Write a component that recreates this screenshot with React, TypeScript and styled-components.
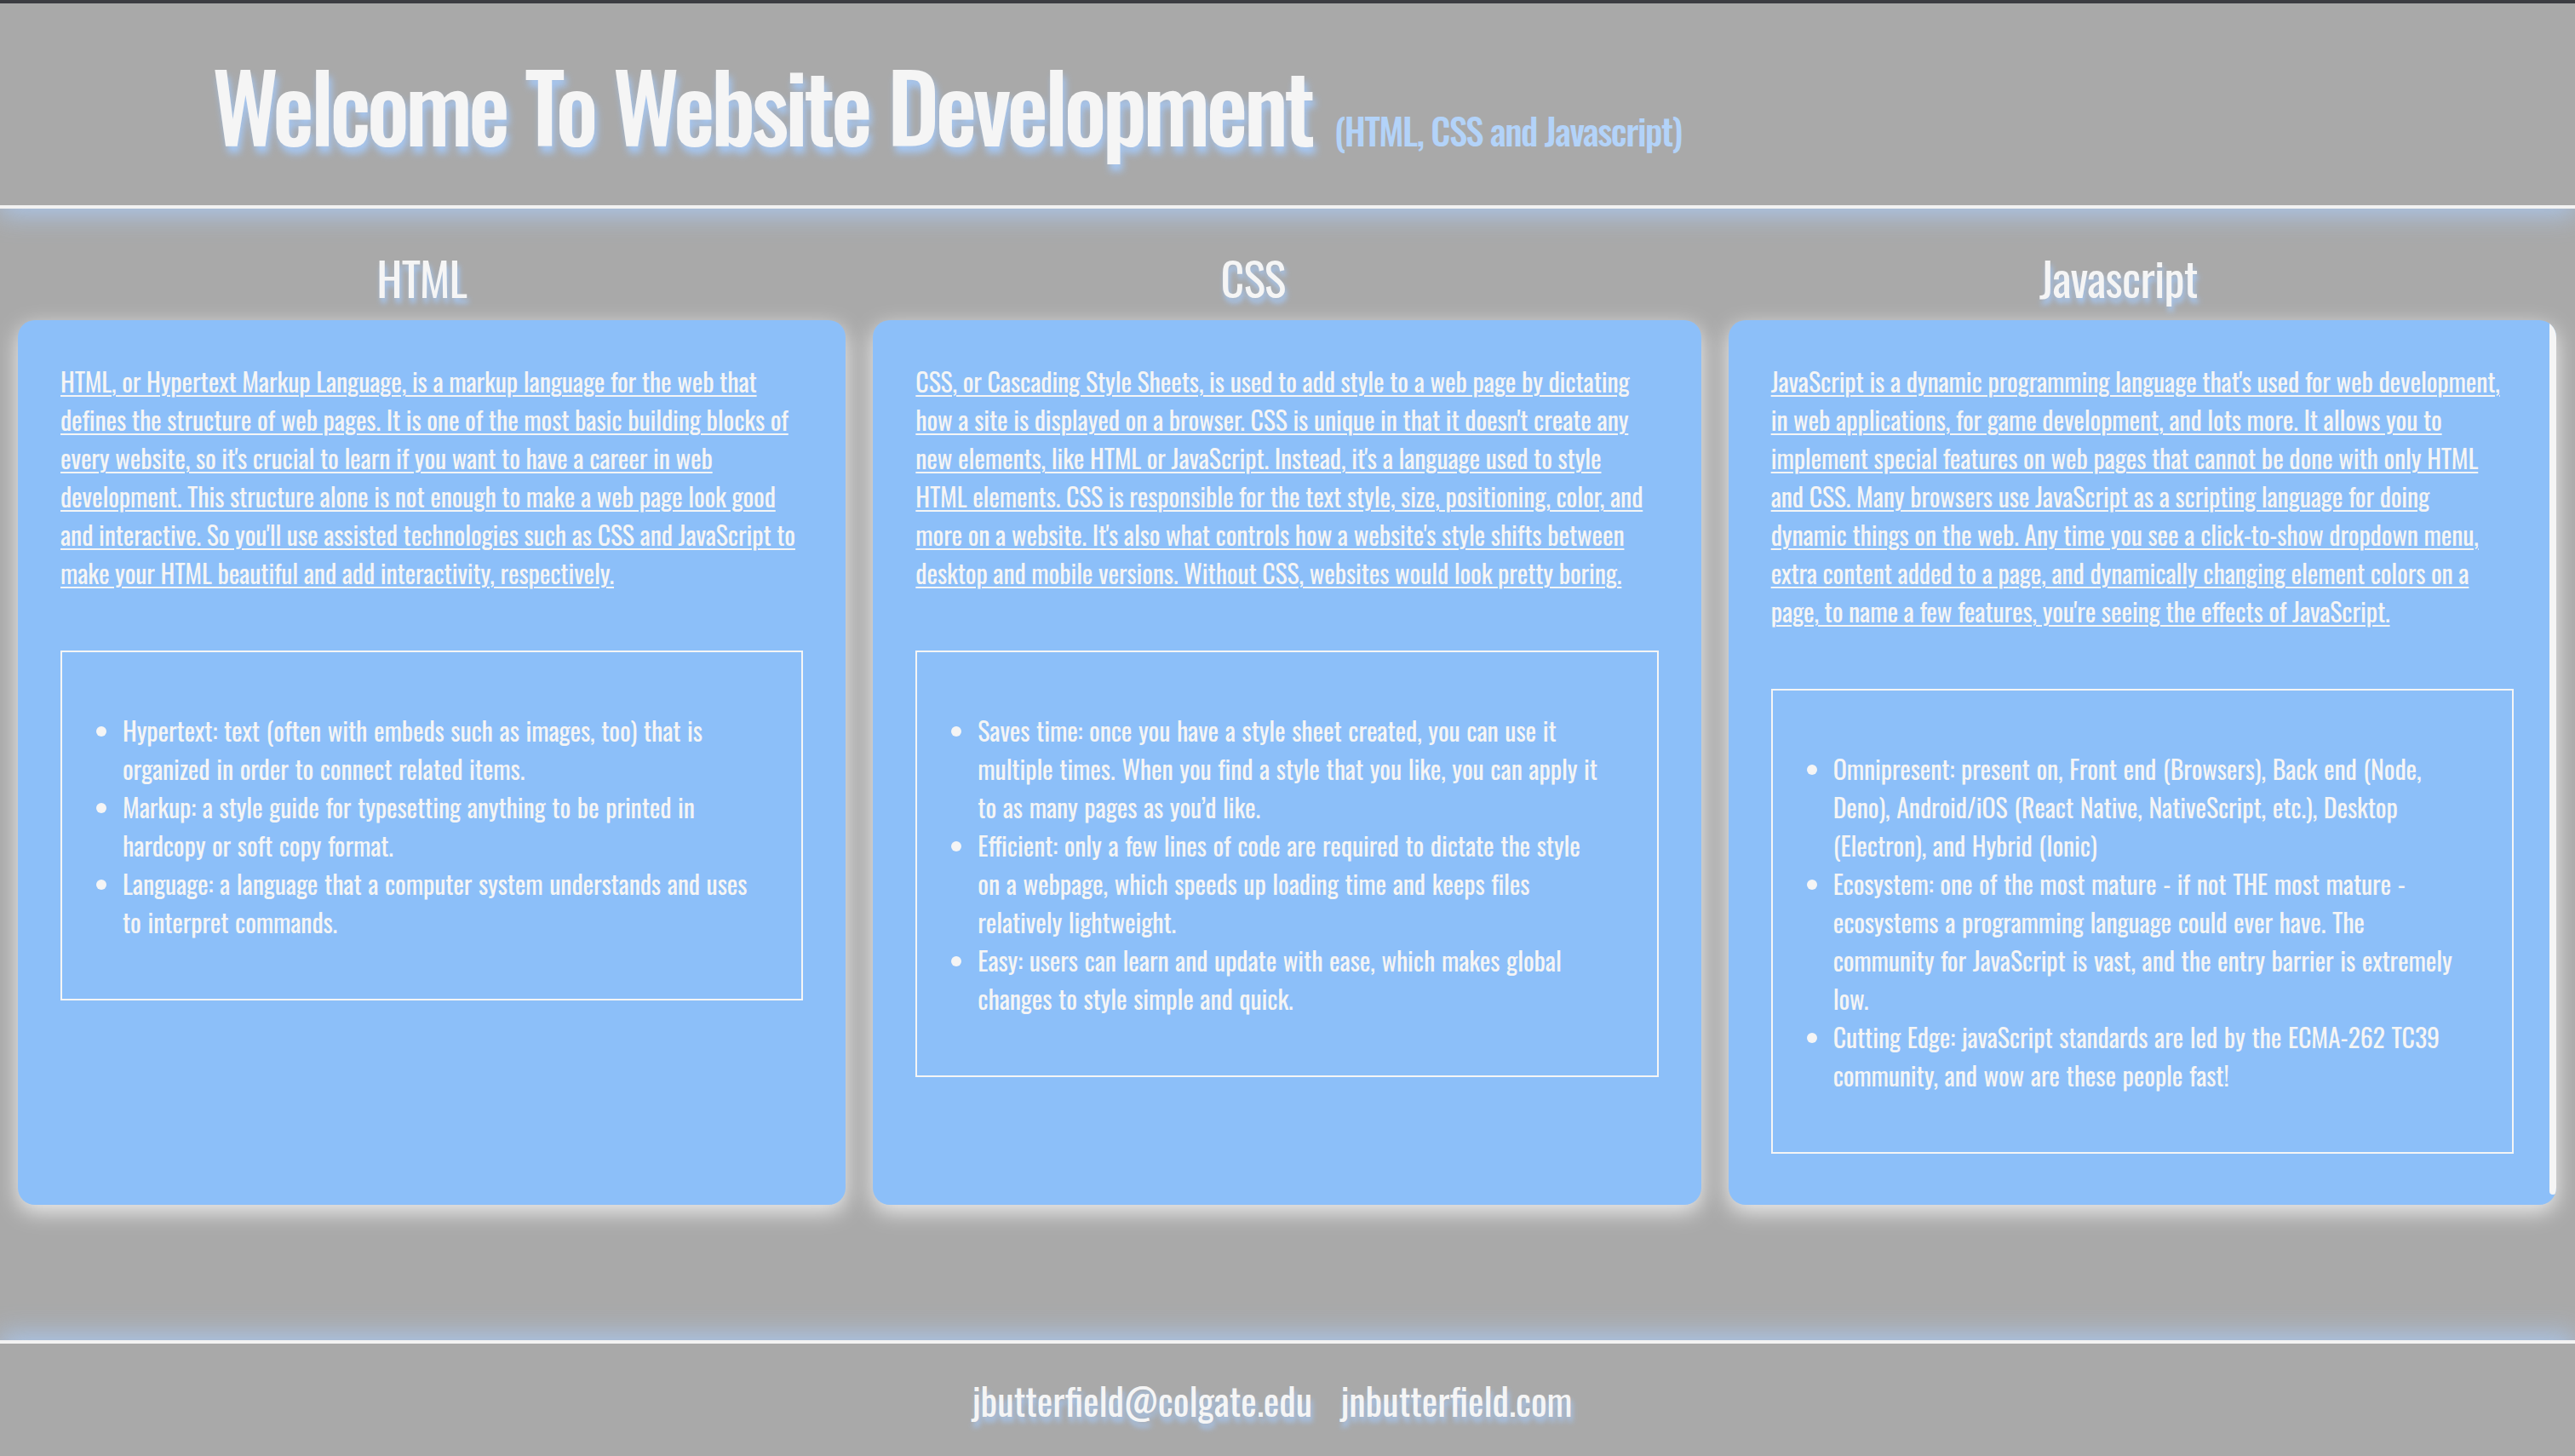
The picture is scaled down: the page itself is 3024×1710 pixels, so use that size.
import React from "react";
import styled, { createGlobalStyle } from "styled-components";

const GlobalStyle = createGlobalStyle`
  html, body { margin: 0; padding: 0; }
  body {
    background: #a9a9a9;
    border-top: 4px solid #3c3d42;
    font-family: "Oswald", "Liberation Sans", sans-serif;
    color: #f5f5f5;
  }
`;

const Page = styled.div`
  display: flex;
  flex-direction: column;
  min-height: 1706px;
`;

const Header = styled.header`
  height: 241px;
  box-sizing: border-box;
  padding: 37px 0 0 249px;
  border-bottom: 4px solid #f2f2f2;
  box-shadow: 0 6px 30px rgba(170, 205, 250, 0.85);
  position: relative;
  z-index: 1;
`;

const Title = styled.h1`
  margin: 0;
  font-size: 110px;
  font-weight: 500;
  letter-spacing: -4.8px;
  line-height: normal;
  color: #f5f5f5;
  text-shadow: 3px 8px 8px rgba(165, 200, 245, 0.95);
`;

const Subtitle = styled.span`
  font-size: 43px;
  font-weight: 500;
  letter-spacing: -1.5px;
  color: #b3d3f9;
  margin-left: 27px;
  text-shadow: none;
`;

const Main = styled.main`
  flex: 1;
  display: grid;
  grid-template-columns: repeat(3, 1fr);
  column-gap: 32px;
  padding: 0 22px 0 21px;
  align-items: start;
`;

const Column = styled.section`
  display: flex;
  flex-direction: column;
`;

const Heading = styled.h2<{ $shift: number }>`
  margin: 41px 0 10px;
  font-size: 54px;
  font-weight: 400;
  letter-spacing: -0.8px;
  line-height: normal;
  text-align: center;
  padding-right: ${(p) => p.$shift * 2}px;
  color: #f5f5f5;
  text-shadow: 2px 6px 6px rgba(165, 200, 245, 0.95);
`;

const Card = styled.div`
  position: relative;
  height: 1039px;
  box-sizing: border-box;
  padding: 49px 50px 0;
  background: #8cbff9;
  border-radius: 20px;
  overflow: hidden;
  box-shadow: 0 8px 26px rgba(255, 255, 255, 0.8);
`;

const ScrollThumb = styled.div`
  position: absolute;
  top: 1px;
  right: 0;
  bottom: 12px;
  width: 8px;
  border-radius: 4px;
  background: #f5f5f5;
`;

const Intro = styled.a`
  display: block;
  margin-right: 7px;
  font-size: 30px;
  font-weight: 400;
  letter-spacing: -0.15px;
  line-height: normal;
  color: #f5f5f5;
  text-decoration: underline;
  text-decoration-thickness: 2px;
  text-underline-offset: 3px;
`;

const ListBox = styled.div`
  margin-top: 69px;
  border: 2px solid #f5f5f5;
  padding: 39px 60px 38px 30px;
`;

const List = styled.ul`
  margin: 30px 0;
  padding-left: 41px;
  font-size: 30px;
  font-weight: 400;
  letter-spacing: -0.15px;
  word-spacing: 1px;
  line-height: normal;
  color: #f5f5f5;
`;

const Footer = styled.footer`
  height: 132px;
  border-top: 4px solid #f2f2f2;
  box-shadow: 0 -6px 30px rgba(170, 205, 250, 0.85);
  display: flex;
  justify-content: center;
  align-items: center;
  gap: 33px;
  padding-right: 36px;
`;

const FooterLink = styled.a`
  font-size: 44px;
  font-weight: 400;
  color: #f5f5f5;
  text-decoration: none;
  text-shadow: 2px 6px 6px rgba(165, 200, 245, 0.95);
`;

type Topic = {
  title: string;
  shift: number;
  intro: string;
  items: string[];
  scroll?: boolean;
};

const topics: Topic[] = [
  {
    title: "HTML",
    shift: 12,
    intro:
      "HTML, or Hypertext Markup Language, is a markup language for the web that defines the structure of web pages. It is one of the most basic building blocks of every website, so it's crucial to learn if you want to have a career in web development. This structure alone is not enough to make a web page look good and interactive. So you'll use assisted technologies such as CSS and JavaScript to make your HTML beautiful and add interactivity, respectively.",
    items: [
      "Hypertext: text (often with embeds such as images, too) that is organized in order to connect related items.",
      "Markup: a style guide for typesetting anything to be printed in hardcopy or soft copy format.",
      "Language: a language that a computer system understands and uses to interpret commands.",
    ],
  },
  {
    title: "CSS",
    shift: 40,
    intro:
      "CSS, or Cascading Style Sheets, is used to add style to a web page by dictating how a site is displayed on a browser. CSS is unique in that it doesn't create any new elements, like HTML or JavaScript. Instead, it's a language used to style HTML elements. CSS is responsible for the text style, size, positioning, color, and more on a website. It's also what controls how a website's style shifts between desktop and mobile versions. Without CSS, websites would look pretty boring.",
    items: [
      "Saves time: once you have a style sheet created, you can use it multiple times. When you find a style that you like, you can apply it to as many pages as you\u2019d like.",
      "Efficient: only a few lines of code are required to dictate the style on a webpage, which speeds up loading time and keeps files relatively lightweight.",
      "Easy: users can learn and update with ease, which makes global changes to style simple and quick.",
    ],
  },
  {
    title: "Javascript",
    shift: 28,
    scroll: true,
    intro:
      "JavaScript is a dynamic programming language that's used for web development, in web applications, for game development, and lots more. It allows you to implement special features on web pages that cannot be done with only HTML and CSS. Many browsers use JavaScript as a scripting language for doing dynamic things on the web. Any time you see a click-to-show dropdown menu, extra content added to a page, and dynamically changing element colors on a page, to name a few features, you're seeing the effects of JavaScript.",
    items: [
      "Omnipresent: present on, Front end (Browsers), Back end (Node, Deno), Android/iOS (React Native, NativeScript, etc.), Desktop (Electron), and Hybrid (Ionic)",
      "Ecosystem: one of the most mature - if not THE most mature - ecosystems a programming language could ever have. The community for JavaScript is vast, and the entry barrier is extremely low.",
      "Cutting Edge: javaScript standards are led by the ECMA-262 TC39 community, and wow are these people fast!",
    ],
  },
];

export default function App() {
  return (
    <>
      <GlobalStyle />
      <Page>
        <Header>
          <Title>
            Welcome To Website Development<Subtitle>(HTML, CSS and Javascript)</Subtitle>
          </Title>
        </Header>
        <Main>
          {topics.map((t) => (
            <Column key={t.title}>
              <Heading $shift={t.shift}>{t.title}</Heading>
              <Card>
                <Intro href="#">{t.intro}</Intro>
                <ListBox>
                  <List>
                    {t.items.map((it) => (
                      <li key={it}>{it}</li>
                    ))}
                  </List>
                </ListBox>
                {t.scroll && <ScrollThumb />}
              </Card>
            </Column>
          ))}
        </Main>
        <Footer>
          <FooterLink href="#">jbutterfield@colgate.edu</FooterLink>
          <FooterLink href="#">jnbutterfield.com</FooterLink>
        </Footer>
      </Page>
    </>
  );
}
